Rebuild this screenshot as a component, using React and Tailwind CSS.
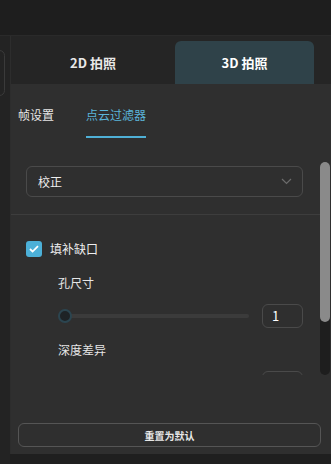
import React from 'react';

const font = { fontFamily: '"Noto Sans CJK SC", "Noto Sans", sans-serif' };

const App = () => {
    return (
        <div className="w-[331px] h-[464px] bg-[#1f1f1f] flex flex-col overflow-hidden text-white" style={font}>
            {/* Top bar */}
            <div className="h-[36px] shrink-0 bg-[#1e1e1e] border-b border-[#2a2a2a]" />

            <div className="flex-1 flex min-h-0">
                {/* Left strip with a neighbouring panel's edge */}
                <div className="w-[10px] shrink-0 bg-[#232323] overflow-hidden">
                    <div className="-ml-[6px] mt-[14px] w-[11px] h-[46px] rounded-md border border-[#3a3a3a]" />
                </div>

                {/* Main panel */}
                <div className="flex-1 flex flex-col mb-[10px] bg-[#252525] border-l border-[#2d2d2d]">
                    {/* Tabs */}
                    <div className="h-[48px] shrink-0 flex items-end">
                        <div className="flex-1 h-[43px] flex items-center justify-center text-[13px] font-bold text-[#e8e8e8]">
                            2D 拍照
                        </div>
                        <div className="w-[139px] h-[43px] mr-[17px] rounded-t-md bg-[#2f4249] flex items-center justify-center text-[13px] font-bold text-white">
                            3D 拍照
                        </div>
                    </div>

                    {/* Content */}
                    <div className="flex-1 flex flex-col bg-[#2f2f2f] min-h-0">
                        <div className="h-[291px] shrink-0 flex overflow-hidden">
                            <div className="flex-1 min-w-0">
                                {/* Sub tabs */}
                                <div className="flex pl-[7px] gap-[32px] text-[12px] leading-[20px]">
                                    <div className="pt-[21px] pb-[11px] border-b-2 border-transparent text-[#e6e6e6]">帧设置</div>
                                    <div className="pt-[21px] pb-[11px] border-b-2 border-[#4fb0d6] text-[#5bb5d9]">点云过滤器</div>
                                </div>

                                {/* Select */}
                                <div className="mt-[28px] ml-[15px] mr-[17px] h-[31px] rounded-md border border-[#4a4a4a] flex items-center justify-between pl-[11px] pr-[10px]">
                                    <span className="text-[12px] text-[#eeeeee]">校正</span>
                                    <svg width="11" height="7" viewBox="0 0 11 7" fill="none">
                                        <path d="M1 1l4.5 4.5L10 1" stroke="#6c6c6c" strokeWidth="1.2" />
                                    </svg>
                                </div>

                                <div className="mt-[17px] h-px bg-[#3d3d3d]" />

                                {/* Checkbox */}
                                <div className="mt-[25px] ml-[15px] flex items-center gap-[8px]">
                                    <div className="w-[16px] h-[16px] rounded-[3px] bg-[#4cb0d8] flex items-center justify-center">
                                        <svg width="10" height="8" viewBox="0 0 10 8" fill="none">
                                            <path d="M1 4l2.6 2.6L9 1.2" stroke="white" strokeWidth="1.8" />
                                        </svg>
                                    </div>
                                    <span className="text-[12px] text-[#eeeeee]">填补缺口</span>
                                </div>

                                <div className="mt-[16px] ml-[47px] text-[12px] leading-[18px] text-[#e6e6e6]">孔尺寸</div>

                                {/* Slider */}
                                <div className="mt-[12px] ml-[45px] mr-[17px] flex items-center">
                                    <div className="flex-1 relative h-[24px] flex items-center">
                                        <div className="ml-[2px] w-[191px] h-[4px] rounded-full bg-[#3b3b3b]" />
                                        <div className="absolute left-[2px] top-[5px] w-[14px] h-[14px] rounded-full bg-[#1e2326] border-2 border-[#2b4550]" />
                                    </div>
                                    <div className="w-[41px] h-[24px] rounded-md border border-[#4a4a4a] flex items-center pl-[9px] text-[13px] text-white">
                                        1
                                    </div>
                                </div>

                                <div className="mt-[13px] ml-[47px] text-[12px] leading-[18px] text-[#e6e6e6]">深度差异</div>

                                <div className="mt-[12px] ml-[251px] w-[41px] h-[24px] rounded-md border border-[#4a4a4a]" />
                            </div>

                            {/* Scrollbar */}
                            <div className="w-[10px] mr-[1px] pt-[78px] flex flex-col">
                                <div className="flex-1 rounded-full bg-[#1e1e1e] flex flex-col">
                                    <div className="h-[160px] rounded-full bg-[#8a8a8a]" />
                                </div>
                            </div>
                        </div>

                        {/* Footer */}
                        <div className="flex-1 flex flex-col justify-end pb-[7px] pl-[7px] pr-[8px]">
                            <button className="h-[24px] mr-[2px] rounded-md border border-[#555555] bg-[#2f2f2f] text-[10px] font-bold text-[#e8e8e8]">
                                重置为默认
                            </button>
                        </div>
                    </div>
                </div>
            </div>
        </div>
    );
};

export default App;
